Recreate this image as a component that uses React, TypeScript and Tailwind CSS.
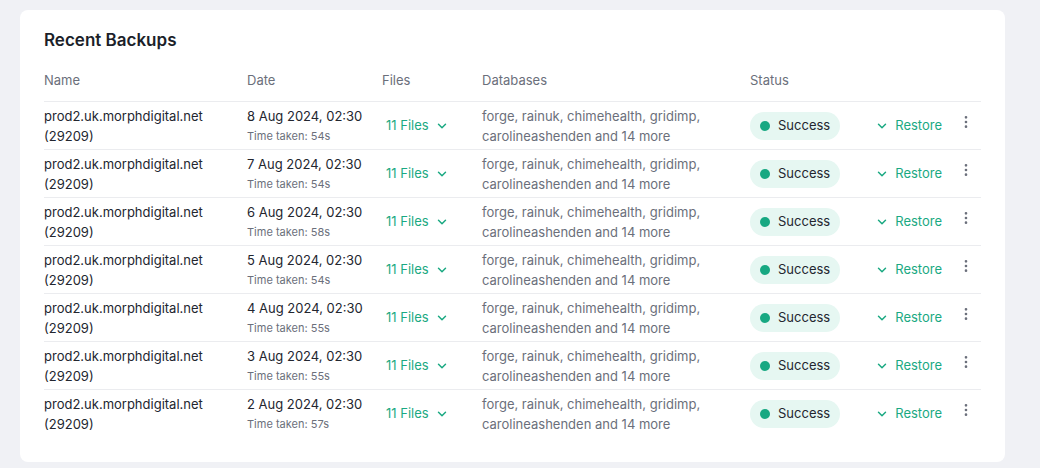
import { ChevronDown, EllipsisVertical } from 'lucide-react'

const rows = [
  ['8 Aug 2024, 02:30', '54s'],
  ['7 Aug 2024, 02:30', '54s'],
  ['6 Aug 2024, 02:30', '58s'],
  ['5 Aug 2024, 02:30', '54s'],
  ['4 Aug 2024, 02:30', '55s'],
  ['3 Aug 2024, 02:30', '55s'],
  ['2 Aug 2024, 02:30', '57s'],
]

const cols = 'grid grid-cols-[203px_135px_100px_268px_118px_1fr]'

export default function App() {
  return (
    <div className="h-[468px] bg-[#f0f1f5] pl-5 pr-[35px] pt-[10px] font-[Inter,sans-serif]">
      <div className="rounded-lg bg-white px-6 pb-[24px] pt-[18px]">
        <h2 className="text-[17px] font-semibold leading-6 text-[#1c1f2a]">Recent Backups</h2>
        <div className={`${cols} mt-[17px] h-[33px] border-b border-[#ebecef] pt-[2px] text-[13px] text-[#6b6f7b]`}>
          <div>Name</div>
          <div>Date</div>
          <div>Files</div>
          <div>Databases</div>
          <div>Status</div>
          <div />
        </div>
        {rows.map(([date, t], i) => (
          <div
            key={i}
            className={`${cols} h-[48px] items-center ${i < rows.length - 1 ? 'border-b border-[#ebecef]' : ''}`}
          >
            <div className="text-[13px] leading-5 text-[#23262f]">
              prod2.uk.morphdigital.net
              <br />
              (29209)
            </div>
            <div className="leading-5">
              <div className="text-[13px] text-[#23262f]">{date}</div>
              <div className="text-[11px] text-[#6b6f7b]">Time taken: {t}</div>
            </div>
            <div className="flex items-center gap-1.5 pl-[4px] text-[13px] text-[#1aa982]">
              11 Files <ChevronDown className="h-3.5 w-3.5" strokeWidth={2.5} />
            </div>
            <div className="text-[13px] leading-5 text-[#6b6f7b]">
              forge, rainuk, chimehealth, gridimp,
              <br />
              carolineashenden and 14 more
            </div>
            <div>
              <span className="inline-flex h-7 items-center gap-2 rounded-full bg-[#e6f7f2] px-[10px] text-[13px] text-[#23262f]">
                <span className="h-[10px] w-[10px] rounded-full bg-[#17a882]" />
                Success
              </span>
            </div>
            <div className="flex items-center justify-end gap-4 pr-[7px]">
              <span className="flex items-center gap-1.5 text-[13px] text-[#1aa982]">
                <ChevronDown className="h-3.5 w-3.5" strokeWidth={2.5} /> Restore
              </span>
              <EllipsisVertical className="-mt-2 h-4 w-4 text-[#6b6f7b]" />
            </div>
          </div>
        ))}
      </div>
    </div>
  )
}
